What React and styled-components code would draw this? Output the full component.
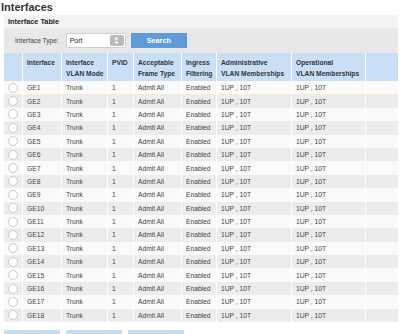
import React, { useState } from 'react';
import styled, { createGlobalStyle } from 'styled-components';

const Global = createGlobalStyle`
    html, body{
        margin: 0;
        padding: 0;
        background: #ffffff;
        overflow: hidden;
    }
    body{
        font-family: "Liberation Sans", Arial, sans-serif;
        color: #333;
    }
`

const columns = [
    { key: 'sel', label: [''], width: 19 },
    { key: 'name', label: ['Interface'], width: 39 },
    { key: 'mode', label: ['Interface', 'VLAN Mode'], width: 46 },
    { key: 'pvid', label: ['PVID'], width: 26 },
    { key: 'frame', label: ['Acceptable', 'Frame Type'], width: 48 },
    { key: 'ingress', label: ['Ingress', 'Filtering'], width: 35 },
    { key: 'admin', label: ['Administrative', 'VLAN Memberships'], width: 75 },
    { key: 'oper', label: ['Operational', 'VLAN Memberships'], width: 74 },
    { key: 'pad', label: [''], width: 32 },
];

const rows = Array.from({ length: 18 }, (_, i) => ({
    name: `GE${i + 1}`,
    mode: 'Trunk',
    pvid: '1',
    frame: 'Admit All',
    ingress: 'Enabled',
    admin: '1UP , 10T',
    oper: '1UP , 10T',
}));

function App() {
    const [ selected, setSelected ] = useState(null);

    return (
        <Page>
            <Global />
            <Title>Interfaces</Title>
            <Section>
                <SectionBar>Interface Table</SectionBar>
                <FilterBar>
                    <FilterLabel>Interface Type:</FilterLabel>
                    <Select>
                        <span>Port</span>
                        <Spinner>
                            <svg width="5" height="9" viewBox="0 0 5 9">
                                <path d="M2.5 0.8 L4.5 3.4 L0.5 3.4 Z" fill="#fff" />
                                <path d="M2.5 8.2 L4.5 5.6 L0.5 5.6 Z" fill="#fff" />
                            </svg>
                        </Spinner>
                    </Select>
                    <SearchButton>Search</SearchButton>
                </FilterBar>
                <Table>
                    <HeadRow>
                        {columns.map(col => (
                            <HeadCell key={col.key} $w={col.width}>
                                {col.label.map((l, i) => <div key={i}>{l}</div>)}
                            </HeadCell>
                        ))}
                    </HeadRow>
                    {rows.map((row, i) => (
                        <Row key={row.name} $alt={i % 2 === 1} onClick={() => setSelected(i)}>
                            <Cell $w={19}><Radio $on={selected === i} /></Cell>
                            <Cell $w={39}>{row.name}</Cell>
                            <Cell $w={46}>{row.mode}</Cell>
                            <Cell $w={26}>{row.pvid}</Cell>
                            <Cell $w={48}>{row.frame}</Cell>
                            <Cell $w={35}>{row.ingress}</Cell>
                            <Cell $w={75}>{row.admin}</Cell>
                            <Cell $w={74}>{row.oper}</Cell>
                            <Cell $w={32}></Cell>
                        </Row>
                    ))}
                </Table>
                <Actions>
                    <ActionButton />
                    <ActionButton />
                    <ActionButton />
                </Actions>
            </Section>
        </Page>
    );
};

export default App

const Page = styled.div`
    width: 400px;
`

const Title = styled.h1`
    margin: 0;
    height: 15px;
    line-height: 15px;
    padding-left: 1px;
    font-size: 11px;
    font-weight: bold;
    color: #333;
`

const Section = styled.div`
    margin-left: 4px;
    width: 394px;
`

const SectionBar = styled.div`
    height: 13px;
    line-height: 13px;
    background: #f3f3f3;
    padding-left: 4px;
    font-size: 7.3px;
    font-weight: bold;
    color: #222;
`

const FilterBar = styled.div`
    display: flex;
    align-items: center;
    height: 25px;
    background: #e8e8e8;
    padding-left: 11px;
`

const FilterLabel = styled.span`
    font-size: 6.65px;
    color: #444;
    margin-right: 7px;
`

const Select = styled.div`
    display: flex;
    align-items: center;
    justify-content: space-between;
    box-sizing: border-box;
    width: 60px;
    height: 15px;
    background: #fff;
    border: 1px solid #cfcfcf;
    border-radius: 2px;
    padding: 1px 1px 1px 3px;
    font-size: 6.8px;
    color: #222;
`

const Spinner = styled.div`
    display: flex;
    align-items: center;
    justify-content: center;
    width: 14px;
    height: 100%;
    background: #b9b9b9;
    border-radius: 2px;
`

const SearchButton = styled.button`
    width: 56px;
    height: 15px;
    margin-left: 5px;
    padding: 0;
    border: none;
    background: #5f9bd8;
    color: #fff;
    font-family: "Liberation Sans", Arial, sans-serif;
    font-weight: bold;
    font-size: 7.3px;
`

const Table = styled.div`
    display: flex;
    flex-direction: column;
`

const HeadRow = styled.div`
    display: flex;
    height: 28px;
    background: #c8dff5;
`

const HeadCell = styled.div`
    box-sizing: border-box;
    width: ${p => p.$w}px;
    flex: none;
    padding: 4px 0 0 4px;
    border-right: 1px solid #fff;
    font-size: 6.7px;
    font-weight: bold;
    line-height: 11px;
    color: #333;
    white-space: nowrap;
    &:last-child{ border-right: none; }
`

const Row = styled.div`
    display: flex;
    height: 13.4px;
    background: ${p => p.$alt ? '#ececec' : '#fafafa'};
`

const Cell = styled.div`
    box-sizing: border-box;
    width: ${p => p.$w}px;
    flex: none;
    display: flex;
    align-items: center;
    padding-left: 4px;
    border-right: 1px solid #fff;
    font-size: 6.7px;
    color: #444;
    white-space: nowrap;
    &:last-child{ border-right: none; }
`

const Radio = styled.span`
    display: block;
    box-sizing: border-box;
    width: 10px;
    height: 10px;
    margin-left: 0px;
    border-radius: 50%;
    background: #fff;
    border: 1px solid ${p => p.$on ? '#5f9bd8' : '#cccccc'};
`

const Actions = styled.div`
    display: flex;
    gap: 6px;
    margin-top: 8px;
`

const ActionButton = styled.div`
    width: 56px;
    height: 14px;
    background: #c9ddf2;
`
